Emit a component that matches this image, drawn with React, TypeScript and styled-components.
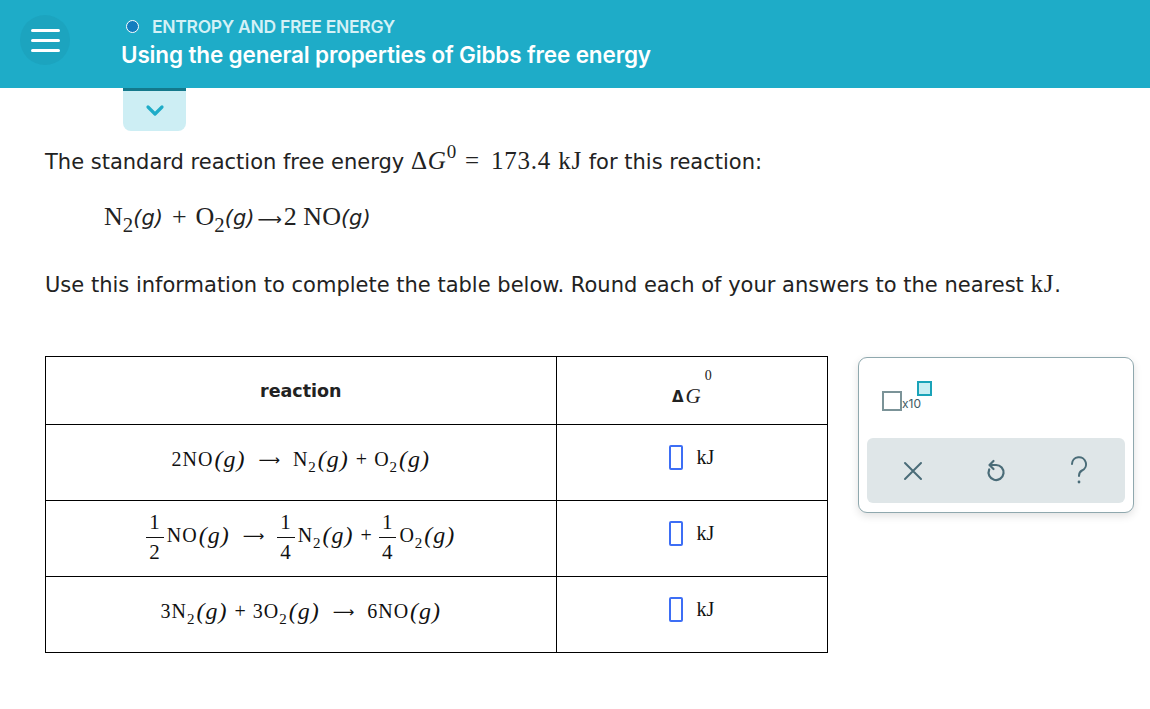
import React from 'react';
import styled, { createGlobalStyle } from 'styled-components';

const GlobalStyle = createGlobalStyle`
  html, body {
    margin: 0;
    padding: 0;
    background: #ffffff;
  }
  body {
    font-family: 'DejaVu Sans', Verdana, sans-serif;
    color: #222;
  }
`;

// ---------- header ----------
const Header = styled.header`
  height: 88px;
  background-color: #1eacc8;
  display: flex;
  align-items: center;
  padding-left: 20px;
  box-sizing: border-box;
`;

const MenuButton = styled.div`
  width: 50px;
  height: 50px;
  border-radius: 50%;
  background-color: #1ca4bf;
  display: flex;
  flex-direction: column;
  justify-content: center;
  align-items: center;
  gap: 7px;
  margin-right: 51px;
  margin-top: -8px;
`;

const MenuLine = styled.span`
  width: 29px;
  height: 3px;
  border-radius: 2px;
  background-color: #ffffff;
`;

const TitleBlock = styled.div`
  display: flex;
  flex-direction: column;
  gap: 4px;
  margin-top: -4px;
`;

const Topic = styled.div`
  display: flex;
  align-items: center;
  gap: 13px;
  font-family: Inter, 'Open Sans', sans-serif;
  font-weight: 600;
  font-size: 17.5px;
  letter-spacing: -0.3px;
  color: #d4f1f6;
  margin-left: 5px;
`;

const TopicDot = styled.span`
  width: 11px;
  height: 11px;
  border-radius: 50%;
  background-color: #137dbf;
  border: 1.5px solid #ffffff;
`;

const Title = styled.h1`
  margin: 0;
  font-family: Inter, 'Open Sans', sans-serif;
  font-weight: 600;
  font-size: 22.5px;
  letter-spacing: -0.15px;
  color: #ffffff;
`;

// ---------- body ----------
const Main = styled.main`
  padding: 0 0 0 45px;
`;

const Tab = styled.div`
  width: 63px;
  height: 40px;
  margin-left: 78px;
  background-color: #cdeef4;
  border-top: 3px solid #14798c;
  border-radius: 0 0 8px 8px;
  display: flex;
  justify-content: center;
  align-items: center;
`;

const Paragraph = styled.p<{ $top: number }>`
  margin: ${(p) => p.$top}px 0 0;
  font-size: 21px;
  line-height: 26px;
  white-space: nowrap;
`;

const MathText = styled.span`
  font-family: 'Liberation Serif', 'Times New Roman', serif;
  font-size: 25px;
  letter-spacing: 0.8px;
`;

const MathItalic = styled.i`
  font-style: italic;
`;

const Sup = styled.sup`
  font-size: 19px;
  vertical-align: 11px;
  line-height: 0;
`;

const Eq = styled.span`
  margin: 0 11px 0 8px;
`;

const Sub = styled.sub`
  font-size: 0.8em;
  vertical-align: -7px;
  line-height: 0;
`;

const EquationLine = styled.div`
  margin: 27px 0 0 59px;
  font-family: 'Liberation Serif', 'Times New Roman', serif;
  font-size: 26px;
  line-height: 30px;
  white-space: nowrap;
`;

const SansItalic = styled.span`
  font-family: 'DejaVu Sans', Verdana, sans-serif;
  font-style: italic;
  font-size: 21px;
`;

const Plus = styled.span`
  margin: 0 9px;
`;

const Work = styled.div`
  display: flex;
  align-items: flex-start;
  gap: 30px;
  margin-top: 58px;
`;

const Table = styled.table`
  border-collapse: collapse;
  width: 783px;
  flex-shrink: 0;
  font-family: 'Liberation Serif', 'Times New Roman', serif;
`;

const HeadCell = styled.th<{ $w: number }>`
  width: ${(p) => p.$w}px;
  height: 67px;
  border: 1px solid #000;
  padding: 0;
  font-family: 'DejaVu Sans', Verdana, sans-serif;
  font-weight: bold;
  font-size: 17.5px;
  text-align: center;
  vertical-align: middle;
`;

const Cell = styled.td`
  height: 69px;
  border: 1px solid #000;
  padding: 0 0 6px;
  text-align: center;
  vertical-align: middle;
`;

const Rx = styled.span`
  display: inline-flex;
  align-items: center;
  gap: 7px;
  font-family: 'Liberation Serif', 'Times New Roman', serif;
  font-size: 20px;
  color: #111;
  white-space: nowrap;
`;

const Species = styled.span`
  display: inline-flex;
  align-items: center;
  letter-spacing: 1px;
`;

const Phase = styled.span`
  font-size: 24px;
  font-style: italic;
  letter-spacing: 1px;
  margin-left: 1px;
`;

const SmallSub = styled.span`
  font-size: 15px;
  position: relative;
  top: 8px;
`;

const Arrow = styled.span`
  font-family: 'DejaVu Sans', sans-serif;
  font-size: 15px;
  margin: 0 6px;
`;

const BigArrow = styled(Arrow)`
  font-size: 17px;
  margin: 0 2px 0 3px;
`;

const Frac = styled.span`
  display: inline-flex;
  flex-direction: column;
  align-items: center;
  font-size: 21px;
  line-height: 19px;
  margin-right: 3px;
  margin-top: 4px;
`;

const FracTop = styled.span`
  border-bottom: 1px solid #111;
  padding: 0 3px 5px;
  margin-bottom: 5px;
`;

const DeltaG = styled.span`
  display: inline-flex;
  align-items: flex-end;
  font-family: 'Liberation Serif', 'Times New Roman', serif;
  font-weight: normal;
  font-size: 21px;
  padding-top: 12px;
`;

const DeltaSym = styled.span`
  font-family: 'DejaVu Sans', sans-serif;
  font-size: 15px;
  font-weight: bold;
  margin-right: 2px;
  margin-bottom: 3px;
`;

const Zero = styled.span`
  font-size: 14px;
  align-self: flex-start;
  margin-top: -16px;
  margin-left: 4px;
`;

const Answer = styled.span`
  display: inline-flex;
  align-items: center;
  gap: 13px;
  font-size: 20px;
  color: #111;
`;

const InputBox = styled.span`
  width: 10px;
  height: 21px;
  border: 2px solid #3d6ef5;
  border-radius: 2px;
`;

// ---------- answer tools panel ----------
const Panel = styled.div`
  width: 276px;
  height: 156px;
  flex-shrink: 0;
  box-sizing: border-box;
  margin-top: 1px;
  border: 1px solid #8fa8ae;
  border-radius: 9px;
  box-shadow: 0 3px 8px rgba(0, 0, 0, 0.12);
  background: #fff;
  display: flex;
  flex-direction: column;
  justify-content: space-between;
  padding: 23px 8px 9px;
`;

const Sci = styled.div`
  display: flex;
  align-items: flex-end;
  margin-left: 15px;
  height: 30px;
`;

const MantissaBox = styled.span`
  width: 16px;
  height: 16px;
  border: 2px solid #7b9398;
`;

const Times = styled.span`
  font-family: Inter, 'Open Sans', sans-serif;
  font-size: 12px;
  color: #3d5a64;
`;

const ExpBox = styled.span`
  width: 11px;
  height: 11px;
  border: 2px solid #1aa3b8;
  background: #c9eef3;
  align-self: flex-start;
  margin-left: -4px;
`;

const ToolBar = styled.div`
  height: 65px;
  border-radius: 6px;
  background-color: #dfe6e8;
  display: flex;
  justify-content: space-around;
  align-items: center;
  padding: 0 4px;
`;

const ToolIcon = styled.span`
  width: 30px;
  height: 30px;
  display: flex;
  justify-content: center;
  align-items: center;
  color: #4a6c78;
`;

const Chevron = () => (
  <svg width="20" height="14" viewBox="0 0 20 14">
    <path d="M3 3 L10 10 L17 3" fill="none" stroke="#1eacc8" strokeWidth="3.2" strokeLinecap="round" strokeLinejoin="round" />
  </svg>
);

const CloseIcon = () => (
  <svg width="20" height="20" viewBox="0 0 20 20">
    <path d="M2 2 L18 18 M18 2 L2 18" stroke="currentColor" strokeWidth="2" strokeLinecap="round" />
  </svg>
);

const UndoIcon = () => (
  <svg width="22" height="26" viewBox="0 0 22 26">
    <path d="M5 7 H11 A7.5 7.5 0 1 1 4.2 11.5" fill="none" stroke="currentColor" strokeWidth="2.2" strokeLinecap="round" />
    <path d="M8.5 3 L4.5 7 L8.5 11" fill="none" stroke="currentColor" strokeWidth="2.2" strokeLinecap="round" strokeLinejoin="round" />
  </svg>
);

const HelpIcon = () => (
  <svg width="20" height="30" viewBox="0 0 20 30">
    <path d="M3 8 A7 7 0 1 1 13 14.5 C10.5 15.8 10 17 10 20" fill="none" stroke="currentColor" strokeWidth="2" strokeLinecap="round" />
    <circle cx="10" cy="26" r="1.4" fill="currentColor" />
  </svg>
);

const Gas = () => <Phase>(g)</Phase>;

const App: React.FC = () => {
  return (
    <>
      <GlobalStyle />
      <Header>
        <MenuButton>
          <MenuLine />
          <MenuLine />
          <MenuLine />
        </MenuButton>
        <TitleBlock>
          <Topic>
            <TopicDot />
            ENTROPY AND FREE ENERGY
          </Topic>
          <Title>Using the general properties of Gibbs free energy</Title>
        </TitleBlock>
      </Header>

      <Main>
        <Tab>
          <Chevron />
        </Tab>

        <Paragraph $top={17}>
          The standard reaction free energy{' '}
          <MathText>
            Δ<MathItalic>G</MathItalic>
            <Sup>0</Sup>
            <Eq>=</Eq>173.4 kJ
          </MathText>{' '}
          for this reaction:
        </Paragraph>

        <EquationLine>
          N<Sub>2</Sub>
          <SansItalic>(g)</SansItalic>
          <Plus>+</Plus>O<Sub>2</Sub>
          <SansItalic>(g)</SansItalic>
          <BigArrow>⟶</BigArrow>2 NO<SansItalic>(g)</SansItalic>
        </EquationLine>

        <Paragraph $top={37}>
          Use this information to complete the table below. Round each of your answers to the nearest{' '}
          <MathText>kJ</MathText>.
        </Paragraph>

        <Work>
          <Table>
            <thead>
              <tr>
                <HeadCell $w={511}>reaction</HeadCell>
                <HeadCell $w={272}>
                  <DeltaG>
                    <DeltaSym>Δ</DeltaSym>
                    <i>G</i>
                    <Zero>0</Zero>
                  </DeltaG>
                </HeadCell>
              </tr>
            </thead>
            <tbody>
              <tr>
                <Cell>
                  <Rx>
                    <Species>
                      2NO
                      <Gas />
                    </Species>
                    <Arrow>⟶</Arrow>
                    <Species>
                      N<SmallSub>2</SmallSub>
                      <Gas />
                    </Species>
                    +
                    <Species>
                      O<SmallSub>2</SmallSub>
                      <Gas />
                    </Species>
                  </Rx>
                </Cell>
                <Cell>
                  <Answer>
                    <InputBox />
                    kJ
                  </Answer>
                </Cell>
              </tr>
              <tr>
                <Cell>
                  <Rx>
                    <Species>
                      <Frac>
                        <FracTop>1</FracTop>2
                      </Frac>
                      NO
                      <Gas />
                    </Species>
                    <Arrow>⟶</Arrow>
                    <Species>
                      <Frac>
                        <FracTop>1</FracTop>4
                      </Frac>
                      N<SmallSub>2</SmallSub>
                      <Gas />
                    </Species>
                    +
                    <Species>
                      <Frac>
                        <FracTop>1</FracTop>4
                      </Frac>
                      O<SmallSub>2</SmallSub>
                      <Gas />
                    </Species>
                  </Rx>
                </Cell>
                <Cell>
                  <Answer>
                    <InputBox />
                    kJ
                  </Answer>
                </Cell>
              </tr>
              <tr>
                <Cell>
                  <Rx>
                    <Species>
                      3N<SmallSub>2</SmallSub>
                      <Gas />
                    </Species>
                    +
                    <Species>
                      3O<SmallSub>2</SmallSub>
                      <Gas />
                    </Species>
                    <Arrow>⟶</Arrow>
                    <Species>
                      6NO
                      <Gas />
                    </Species>
                  </Rx>
                </Cell>
                <Cell>
                  <Answer>
                    <InputBox />
                    kJ
                  </Answer>
                </Cell>
              </tr>
            </tbody>
          </Table>

          <Panel>
            <Sci>
              <MantissaBox />
              <Times>x10</Times>
              <ExpBox />
            </Sci>
            <ToolBar>
              <ToolIcon>
                <CloseIcon />
              </ToolIcon>
              <ToolIcon>
                <UndoIcon />
              </ToolIcon>
              <ToolIcon>
                <HelpIcon />
              </ToolIcon>
            </ToolBar>
          </Panel>
        </Work>
      </Main>
    </>
  );
};

export default App;
